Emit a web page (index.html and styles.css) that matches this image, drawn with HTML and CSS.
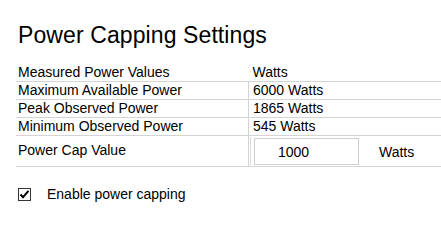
FILE: index.html
```html
<!DOCTYPE html>
<html>
<head>
<meta charset="utf-8">
<link rel="stylesheet" href="styles.css">
</head>
<body>
<div class="page">
  <h1 class="title">Power Capping Settings</h1>
  <table class="caps">
    <tr class="head">
      <td class="label">Measured Power Values</td>
      <td class="value">Watts</td>
    </tr>
    <tr>
      <td class="label">Maximum Available Power</td>
      <td class="value">6000 Watts</td>
    </tr>
    <tr>
      <td class="label">Peak Observed Power</td>
      <td class="value">1865 Watts</td>
    </tr>
    <tr>
      <td class="label">Minimum Observed Power</td>
      <td class="value">545 Watts</td>
    </tr>
    <tr class="cap">
      <td class="label">Power Cap Value</td>
      <td class="inputcell">
        <div class="inputwrap">
          <input class="capinput" type="text" value="1000">
          <span class="unit">Watts</span>
        </div>
      </td>
    </tr>
  </table>
  <label class="check">
    <span class="box"><svg width="11" height="11" viewBox="0 0 11 11"><path d="M1.5 5.5 L4 8.2 L9.5 1.8" fill="none" stroke="#000" stroke-width="2"/></svg></span>
    <span class="checktext">Enable power capping</span>
  </label>
</div>
</body>
</html>
```

FILE: styles.css
```css
body {
  margin: 0;
  font-family: "Liberation Sans", Arial, sans-serif;
  color: #000;
  background: #fff;
}
.page {
  padding: 22px 0 0 16px;
}
.title {
  margin: 0 0 15px 2px;
  font-size: 23px;
  font-weight: normal;
  line-height: 26px;
  letter-spacing: 0.1px;
  color: #000;
}
.caps {
  border-collapse: collapse;
  width: 425px;
  font-size: 14px;
  color: #000;
}
.caps td {
  height: 17px;
  line-height: 17px;
  padding: 0;
  border-bottom: 1px solid #d4d4d4;
  white-space: nowrap;
}
.caps tr.head td {
  height: 18px;
}
.caps td.label {
  width: 230px;
  padding-left: 2px;
  border-right: 1px solid #d4d4d4;
}
.caps tr.head td.label {
  border-right: none;
}
.caps td.value {
  padding-left: 4px;
}
.caps tr.cap td {
  height: 28px;
  vertical-align: middle;
}
.caps tr.cap td.label {
  padding-bottom: 2px;
}
.caps td.inputcell {
  padding: 0 0 0 1px;
}
.inputwrap {
  display: flex;
  align-items: center;
  height: 28px;
  border-left: 1px solid #dcdcdc;
  padding-left: 3px;
}
.capinput {
  box-sizing: border-box;
  width: 105px;
  height: 27px;
  margin: 1px 0 0 0;
  border: 1px solid #cfcfcf;
  padding: 0 0 0 23px;
  font-family: "Liberation Sans", Arial, sans-serif;
  font-size: 14px;
  color: #000;
  background: #fff;
  outline: none;
}
.unit {
  margin-left: 20px;
  padding-top: 2px;
}
.check {
  display: flex;
  align-items: center;
  margin: 19px 0 0 2px;
  font-size: 14px;
  color: #000;
}
.box {
  box-sizing: border-box;
  width: 13px;
  height: 13px;
  border: 1px solid #333;
  display: flex;
  align-items: center;
  justify-content: center;
  background: #fff;
}
.checktext {
  margin-left: 16px;
}
```
